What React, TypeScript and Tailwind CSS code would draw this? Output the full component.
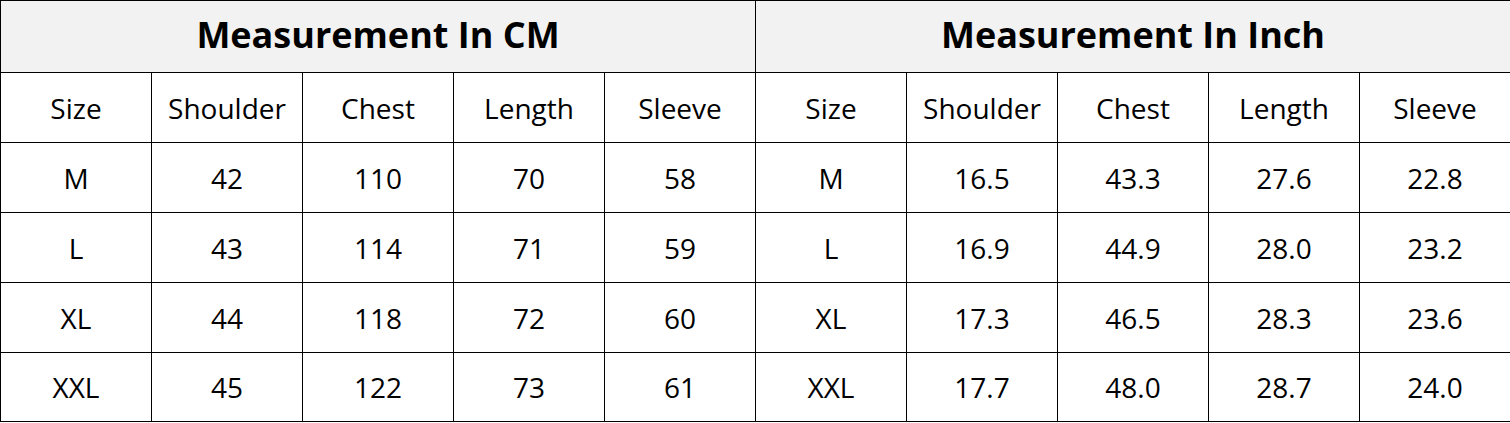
const cmRows = [
  ["M", "42", "110", "70", "58"],
  ["L", "43", "114", "71", "59"],
  ["XL", "44", "118", "72", "60"],
  ["XXL", "45", "122", "73", "61"],
];

const inchRows = [
  ["M", "16.5", "43.3", "27.6", "22.8"],
  ["L", "16.9", "44.9", "28.0", "23.2"],
  ["XL", "17.3", "46.5", "28.3", "23.6"],
  ["XXL", "17.7", "48.0", "28.7", "24.0"],
];

const labels = ["Size", "Shoulder", "Chest", "Length", "Sleeve"];

function Cell({ children, last }: { children: React.ReactNode; last?: boolean }) {
  return (
    <div
      className={
        "flex items-center justify-center border-l border-t border-black text-[28px] leading-none text-black " +
        (last ? "border-b" : "")
      }
    >
      {children}
    </div>
  );
}

export default function App() {
  return (
    <div className="w-[1510px] h-[423px] bg-white" style={{ fontFamily: '"Open Sans", "Noto Sans", sans-serif' }}>
      <div className="grid grid-cols-[repeat(10,151px)] grid-rows-[72px_70px_70px_70px_70px_70px]">
        <div className="col-span-5 flex items-center justify-center border-l border-t border-black bg-[#f2f2f2] pb-1 text-[36px] font-bold text-black">
          Measurement In CM
        </div>
        <div className="col-span-5 flex items-center justify-center border-l border-t border-black bg-[#f2f2f2] pb-1 text-[36px] font-bold text-black">
          Measurement In Inch
        </div>
        {labels.map((l) => (
          <Cell key={"a" + l}>{l}</Cell>
        ))}
        {labels.map((l) => (
          <Cell key={"b" + l}>{l}</Cell>
        ))}
        {cmRows.map((row, i) => (
          <>
            {row.map((v, j) => (
              <Cell key={"c" + i + j} last={i === 3}>
                {v}
              </Cell>
            ))}
            {inchRows[i].map((v, j) => (
              <Cell key={"d" + i + j} last={i === 3}>
                {v}
              </Cell>
            ))}
          </>
        ))}
      </div>
    </div>
  );
}
